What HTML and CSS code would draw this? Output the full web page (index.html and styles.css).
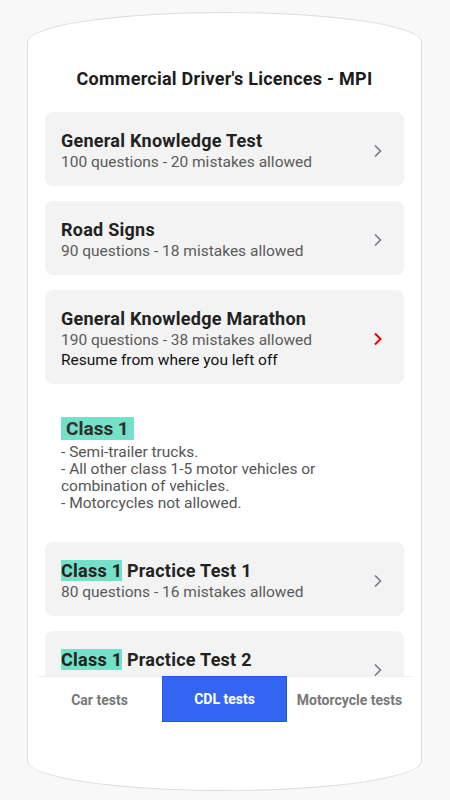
FILE: index.html
```html
<!DOCTYPE html>
<html lang="en">
<head>
    <meta charset="UTF-8">
    <meta name="viewport" content="width=device-width, initial-scale=1.0">
    <link rel="stylesheet" href="styles.css">
</head>
<body>
    <div class="phone">
        <h1 class="page-title">Commercial Driver's Licences - MPI</h1>

        <div class="scroll">
            <div class="card">
                <div class="card-text">
                    <div class="card-title">General Knowledge Test</div>
                    <div class="card-sub">100 questions - 20 mistakes allowed</div>
                </div>
                <svg class="chevron" width="10" height="14" viewBox="0 0 10 14"><path d="M2 1.5 L7.5 7 L2 12.5" /></svg>
            </div>

            <div class="card">
                <div class="card-text">
                    <div class="card-title">Road Signs</div>
                    <div class="card-sub">90 questions - 18 mistakes allowed</div>
                </div>
                <svg class="chevron" width="10" height="14" viewBox="0 0 10 14"><path d="M2 1.5 L7.5 7 L2 12.5" /></svg>
            </div>

            <div class="card">
                <div class="card-text">
                    <div class="card-title">General Knowledge Marathon</div>
                    <div class="card-sub">190 questions - 38 mistakes allowed</div>
                    <div class="card-resume">Resume from where you left off</div>
                </div>
                <svg class="chevron chevron-red" width="10" height="14" viewBox="0 0 10 14"><path d="M2 1.5 L7.5 7 L2 12.5" /></svg>
            </div>

            <div class="class-info">
                <span class="class-tag class-tag-big">Class 1</span>
                <p class="class-desc">
                    - Semi-trailer trucks.<br>
                    - All other class 1-5 motor vehicles or<br>
                    combination of vehicles.<br>
                    - Motorcycles not allowed.
                </p>
            </div>

            <div class="card">
                <div class="card-text">
                    <div class="card-title"><span class="class-tag">Class 1</span> Practice Test 1</div>
                    <div class="card-sub">80 questions - 16 mistakes allowed</div>
                </div>
                <svg class="chevron" width="10" height="14" viewBox="0 0 10 14"><path d="M2 1.5 L7.5 7 L2 12.5" /></svg>
            </div>

            <div class="card card-cut">
                <div class="card-text">
                    <div class="card-title"><span class="class-tag">Class 1</span> Practice Test 2</div>
                </div>
                <svg class="chevron" width="10" height="14" viewBox="0 0 10 14"><path d="M2 1.5 L7.5 7 L2 12.5" /></svg>
            </div>
        </div>

        <div class="tabs">
            <div class="tab">Car tests</div>
            <div class="tab tab-active">CDL tests</div>
            <div class="tab">Motorcycle tests</div>
        </div>
        <div class="bottom-space"></div>
    </div>
</body>
</html>
```

FILE: styles.css
```css
* {
    margin: 0;
    padding: 0;
    box-sizing: border-box;
    font-family: Roboto, 'Noto Sans', sans-serif;
}
body {
    background: #f8f8f8;
}
.phone {
    margin: 12px 0 0 27px;
    width: 395px;
    height: 779px;
    background: #fff;
    border: 1px solid #dcdcdc;
    border-radius: 50% / 30px;
    overflow: hidden;
    display: flex;
    flex-direction: column;
}

.page-title {
    font-size: 18px;
    line-height: 20px;
    font-weight: bold;
    letter-spacing: 0.25px;
    color: #1c1c1c;
    text-align: center;
    padding-top: 56px;
    margin-bottom: 23px;
}

/* Scrollable list */
.scroll {
    flex: 1;
    overflow: hidden;
    margin: 0 9px;
    padding: 0 8px;
}
.card {
    background: #f3f3f3;
    border-radius: 8px;
    padding: 18px 16px 14px;
    margin-bottom: 15px;
    display: flex;
    align-items: center;
    justify-content: space-between;
}
.card-cut .card-text {
    padding-bottom: 20px;
}
.card-title {
    font-size: 18px;
    line-height: 22px;
    font-weight: bold;
    letter-spacing: 0.25px;
    color: #222;
}
.card-sub {
    font-size: 15.5px;
    line-height: 20px;
    color: #5a5a5a;
}
.card-resume {
    font-size: 15.5px;
    line-height: 20px;
    color: #111;
}
.chevron {
    margin-right: 5px;
    flex-shrink: 0;
}
.chevron path {
    fill: none;
    stroke: #78788a;
    stroke-width: 1.6;
}
.chevron-red path {
    stroke: #e60000;
    stroke-width: 2;
}

.class-tag {
    background: #74e0c8;
    color: #222;
}
.class-info {
    padding: 18px 16px 30px;
}
.class-tag-big {
    display: inline-block;
    font-size: 19px;
    line-height: 23px;
    font-weight: bold;
    color: #2f2f2f;
    padding: 0 5px;
}
.class-desc {
    font-size: 15.5px;
    line-height: 17px;
    color: #555;
    margin-top: 4px;
}

/* Bottom tabs */
.tabs {
    height: 46px;
    margin: 0 9px;
    border-top: 1px solid #f0f0f0;
    display: grid;
    grid-template-columns: repeat(3, 1fr);
}
.tab {
    display: flex;
    align-items: center;
    justify-content: center;
    font-size: 14px;
    font-weight: bold;
    color: #777;
}
.tab-active {
    background: #3465f2;
    border: 1px solid #2159e6;
    color: #fff;
    margin-top: -1px;
}
.bottom-space {
    height: 68px;
}
```
